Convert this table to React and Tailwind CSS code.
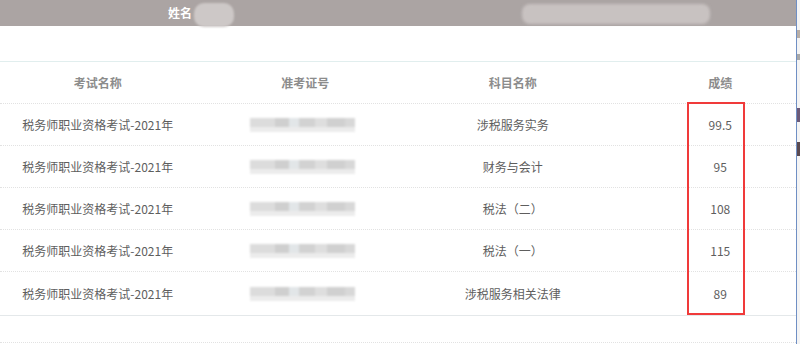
import React from "react";

const rows = [
  ["税务师职业资格考试-2021年", "涉税服务实务", "99.5"],
  ["税务师职业资格考试-2021年", "财务与会计", "95"],
  ["税务师职业资格考试-2021年", "税法（二）", "108"],
  ["税务师职业资格考试-2021年", "税法（一）", "115"],
  ["税务师职业资格考试-2021年", "涉税服务相关法律", "89"],
];

function BlurId() {
  return (
    <div className="w-[105px] flex flex-col blur-[1.3px]">
      <div className="h-[9px] flex items-stretch">
        <div className="flex-1 bg-[#dcdcdc]" />
        <div className="w-[14px] bg-[#cfcfcf]" />
        <div className="w-[10px] bg-[#e2e6e8]" />
        <div className="w-[16px] bg-[#d2d2d2]" />
        <div className="w-[12px] bg-[#dedede]" />
        <div className="w-[18px] bg-[#d0d0d0]" />
        <div className="w-[10px] bg-[#d8d8d8]" />
      </div>
      <div className="h-[5px] bg-[#ececec]" />
    </div>
  );
}

export default function App() {
  return (
    <div
      className="w-[800px] h-[344px] flex bg-white overflow-hidden relative"
      style={{ fontFamily: '"Noto Sans CJK SC", "Noto Sans", sans-serif' }}
    >
      <div className="w-[796px] flex flex-col relative overflow-hidden">
        <div className="h-[26px] bg-[#aba4a3] flex items-center shrink-0 relative">
          <span className="ml-[168px] text-[12px] font-bold text-white leading-none">姓名</span>
          <div className="ml-[2px] mt-[3px] w-[40px] h-[24px] rounded-[10px] bg-[#cdc8c7] blur-[1px]" />
          <div className="absolute left-[522px] top-[4px] w-[188px] h-[20px] rounded-[8px] bg-[#c8c2c1] blur-[1.5px]" />
        </div>
        <div className="h-[35px] shrink-0" />
        <div className="border-t border-[#e1eeee] shrink-0">
          <div className="w-[830px] -ml-[6px] grid grid-cols-4 h-[41px] items-center text-center text-[12px] font-bold text-[#8c8c8c]">
            <div>考试名称</div>
            <div>准考证号</div>
            <div>科目名称</div>
            <div>成绩</div>
          </div>
        </div>
        {rows.map((r, i) => (
          <div
            key={i}
            className="border-t border-dotted border-[#e2e2e2] shrink-0"
            style={i === rows.length - 1 ? { borderBottom: "1px solid #e4e8ea" } : undefined}
          >
            <div
              className={
                "w-[830px] -ml-[6px] grid grid-cols-4 items-center text-center text-[12px] text-[#5e5e5e] " +
                (i === rows.length - 1 ? "h-[43px]" : "h-[41px]")
              }
            >
              <div>{r[0]}</div>
              <div className="flex justify-center pr-[6px]">
                <BlurId />
              </div>
              <div>{r[1]}</div>
              <div>{r[2]}</div>
            </div>
          </div>
        ))}
        <div className="h-[26px] shrink-0" />
        <div className="border-t border-dotted border-[#e2e2e2] shrink-0" />
        <div className="absolute left-[687px] top-[102px] w-[58px] h-[213px] border-2 border-[#f03a3a]" />
      </div>
      <div className="w-px bg-[#6f8fc4] shrink-0" />
      <div className="w-[3px] flex flex-col shrink-0 bg-[#f4f4f4]">
        <div className="h-[30px]" />
        <div className="h-[8px] bg-[#b8aea6]" />
        <div className="h-[16px]" />
        <div className="h-[6px] bg-[#a8a8a8]" />
        <div className="h-[48px]" />
        <div className="h-[14px] bg-[#6c5a78]" />
        <div className="h-[20px]" />
        <div className="h-[14px] bg-[#5a4a50]" />
      </div>
    </div>
  );
}
